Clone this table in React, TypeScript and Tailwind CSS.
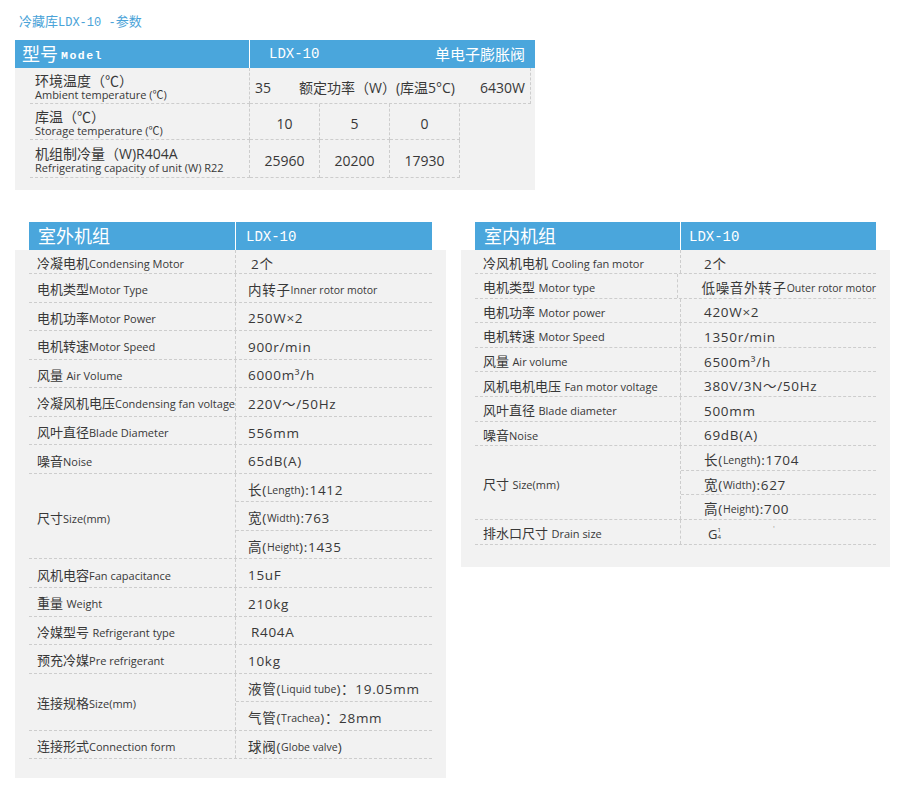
import type { ReactNode } from "react";

type Row = {
  zh: string;
  en: string;
  gap?: boolean;
  vals: ReactNode[];
};

const dash = "border-dashed border-[#cdcdcd]";

function Small({ children }: { children: ReactNode }) {
  return <span className="text-[10.5px] tracking-normal">{children}</span>;
}

const outdoor: Row[] = [
  { zh: "冷凝电机", en: "Condensing Motor", vals: [<span className="pl-[3px]">2个</span>] },
  { zh: "电机类型", en: "Motor Type", vals: [<>内转子<Small>Inner rotor motor</Small></>] },
  { zh: "电机功率", en: "Motor Power", vals: ["250W×2"] },
  { zh: "电机转速", en: "Motor Speed", vals: ["900r/min"] },
  { zh: "风量", en: "Air Volume", gap: true, vals: ["6000m³/h"] },
  { zh: "冷凝风机电压", en: "Condensing fan voltage", vals: ["220V～/50Hz"] },
  { zh: "风叶直径", en: "Blade Diameter", vals: ["556mm"] },
  { zh: "噪音", en: "Noise", vals: ["65dB(A)"] },
  {
    zh: "尺寸",
    en: "Size(mm)",
    vals: [
      <>长(<Small>Length</Small>):1412</>,
      <>宽(<Small>Width</Small>):763</>,
      <>高(<Small>Height</Small>):1435</>,
    ],
  },
  { zh: "风机电容", en: "Fan capacitance", vals: ["15uF"] },
  { zh: "重量", en: "Weight", gap: true, vals: ["210kg"] },
  { zh: "冷媒型号", en: "Refrigerant type", gap: true, vals: [<span className="pl-[3px]">R404A</span>] },
  { zh: "预充冷媒", en: "Pre refrigerant", vals: ["10kg"] },
  {
    zh: "连接规格",
    en: "Size(mm)",
    vals: [<>液管(<Small>Liquid tube</Small>)：19.05mm</>, <>气管(<Small>Trachea</Small>)：28mm</>],
  },
  { zh: "连接形式", en: "Connection form", vals: [<>球阀(<Small>Globe valve</Small>)</>] },
];

const indoor: Row[] = [
  { zh: "冷风机电机", en: "Cooling fan motor", gap: true, vals: ["2个"] },
  { zh: "电机类型", en: "Motor type", gap: true, vals: [<>低噪音外转子 <Small>Outer rotor motor</Small></>] },
  { zh: "电机功率", en: "Motor power", gap: true, vals: ["420W×2"] },
  { zh: "电机转速", en: "Motor Speed", gap: true, vals: ["1350r/min"] },
  { zh: "风量", en: "Air volume", gap: true, vals: ["6500m³/h"] },
  { zh: "风机电机电压", en: "Fan motor voltage", gap: true, vals: ["380V/3N～/50Hz"] },
  { zh: "风叶直径", en: "Blade diameter", gap: true, vals: ["500mm"] },
  { zh: "噪音", en: "Noise", vals: ["69dB(A)"] },
  {
    zh: "尺寸",
    en: "Size(mm)",
    gap: true,
    vals: [
      <>长(<Small>Length</Small>):1704</>,
      <>宽(<Small>Width</Small>):627</>,
      <>高(<Small>Height</Small>):700</>,
    ],
  },
  {
    zh: "排水口尺寸",
    en: "Drain size",
    gap: true,
    vals: [
      <span className="flex items-center pl-[4px] text-[13px] tracking-normal">
        G
        <span className="flex flex-col text-[6px] leading-[7px]">
          <span>1</span>
          <span>4</span>
        </span>
        <span className="-mt-[12px] ml-[52px] text-[8px] leading-[8px] text-[#999]">'</span>
      </span>,
    ],
  },
];

function SpecPanel({
  title,
  rows,
  labelW,
  valuePad,
  headPad,
  rowH,
  width,
  bottomPad,
}: {
  title: string;
  rows: Row[];
  labelW: string;
  valuePad: string;
  headPad: string;
  rowH: number;
  width: string;
  bottomPad: string;
}) {
  return (
    <div className={width}>
      <div className="mx-[14px] flex h-[28px] bg-[#4aa6dc] text-white">
        <div className={`${labelW} flex items-center border-r border-white pl-[9px] text-[18px]`}>{title}</div>
        <div className={`flex items-center ${headPad} pt-[2px] font-['Liberation_Mono',monospace] text-[14px]`}>LDX-10</div>
      </div>
      <div className={`bg-[#f2f2f2] px-[14px] ${bottomPad}`}>
        {rows.map((r, i) => {
          const first = i === 0;
          return (
            <div key={i} className={`flex border-b ${dash}`}>
              <div className={`${labelW} flex items-center border-r ${dash} pl-[8px] pt-[4px] whitespace-nowrap`}>
                <span className="text-[13px] leading-[16px]">
                  {r.zh}
                  {r.gap ? " " : ""}
                  <span className="text-[11px]">{r.en}</span>
                </span>
              </div>
              <div className="flex flex-1 flex-col">
                {r.vals.map((v, j) => {
                  const last = j === r.vals.length - 1;
                  const h = (first ? 24 : rowH) - (last ? 1 : 0);
                  return (
                    <div
                      key={j}
                      style={{ height: h }}
                      className={`flex items-center ${valuePad} pt-[4px] text-[13.5px] leading-[16px] tracking-[0.7px] whitespace-nowrap ${
                        last ? "" : `border-b ${dash}`
                      }`}
                    >
                      {v}
                    </div>
                  );
                })}
              </div>
            </div>
          );
        })}
      </div>
    </div>
  );
}

export default function App() {
  return (
    <div className="h-[801px] w-[897px] bg-white font-['Open_Sans','Noto_Sans_CJK_SC',sans-serif] text-[#383838]">
      <div className="pl-[19px] pt-[12px] text-[13px] leading-[18px] text-[#4aa3d8]">
        冷藏库<span className="font-['Liberation_Mono',monospace] text-[12px]">LDX-10 -</span>参数
      </div>

      <div className="ml-[15px] mt-[8px] h-[150px] w-[520px] bg-[#f2f2f2]">
        <div className="flex h-[28px] bg-[#4aa6dc] text-white">
          <div className="flex w-[235px] items-center border-r border-white pl-[7px]">
            <span className="text-[18px]">型号</span>
            <span className="ml-[3px] mt-[4px] font-['Liberation_Mono',monospace] text-[11.5px] font-bold tracking-[1.5px]">
              Model
            </span>
          </div>
          <div className="flex flex-1 items-center justify-between pl-[19px] pr-[10px]">
            <span className="font-['Liberation_Mono',monospace] text-[14px]">LDX-10</span>
            <span className="text-[15px]">单电子膨胀阀</span>
          </div>
        </div>

        <div className="pl-[15px]">
          <div className="flex h-[36px]">
            <div className={`flex w-[220px] flex-col justify-center border-b border-r ${dash} pl-[5px] pt-[3px]`}>
              <span className="text-[14px] leading-[16px]">环境温度（℃）</span>
              <span className="text-[11px] leading-[12px]">Ambient temperature (℃)</span>
            </div>
            <div className={`flex w-[281px] items-center border-b border-r ${dash} pl-[5px] pr-[5px] pt-[3px] text-[14px]`}>
              <span className="w-[44px]">35</span>
              <span className="flex-1">额定功率（W）(库温5°C)</span>
              <span>6430W</span>
            </div>
          </div>
          {[
            { zh: "库温（℃）", en: "Storage temperature (℃)", v: ["10", "5", "0"], h: "h-[36px]" },
            {
              zh: "机组制冷量（W)R404A",
              en: "Refrigerating capacity of unit (W) R22",
              v: ["25960", "20200", "17930"],
              h: "h-[38px]",
            },
          ].map((r) => (
            <div key={r.zh} className={`flex ${r.h}`}>
              <div className={`flex w-[220px] flex-col justify-center border-b border-r ${dash} pl-[5px] pt-[3px]`}>
                <span className="text-[14px] leading-[16px]">{r.zh}</span>
                <span className="text-[11px] leading-[12px]">{r.en}</span>
              </div>
              {r.v.map((v, j) => (
                <div
                  key={j}
                  className={`flex w-[70px] items-center justify-center border-b border-r ${dash} pt-[3px] text-[14px]`}
                >
                  {v}
                </div>
              ))}
            </div>
          ))}
        </div>
      </div>

      <div className="ml-[15px] mt-[32px] flex items-start gap-[15px]">
        <SpecPanel
          title="室外机组"
          rows={outdoor}
          labelW="w-[207px]"
          valuePad="pl-[12px]"
          headPad="pl-[10px]"
          rowH={28.56}
          width="w-[431px]"
          bottomPad="pb-[19px]"
        />
        <SpecPanel
          title="室内机组"
          rows={indoor}
          labelW="w-[206px]"
          valuePad="pl-[23px]"
          headPad="pl-[8px]"
          rowH={24.6}
          width="w-[429px]"
          bottomPad="pb-[22px]"
        />
      </div>
    </div>
  );
}
